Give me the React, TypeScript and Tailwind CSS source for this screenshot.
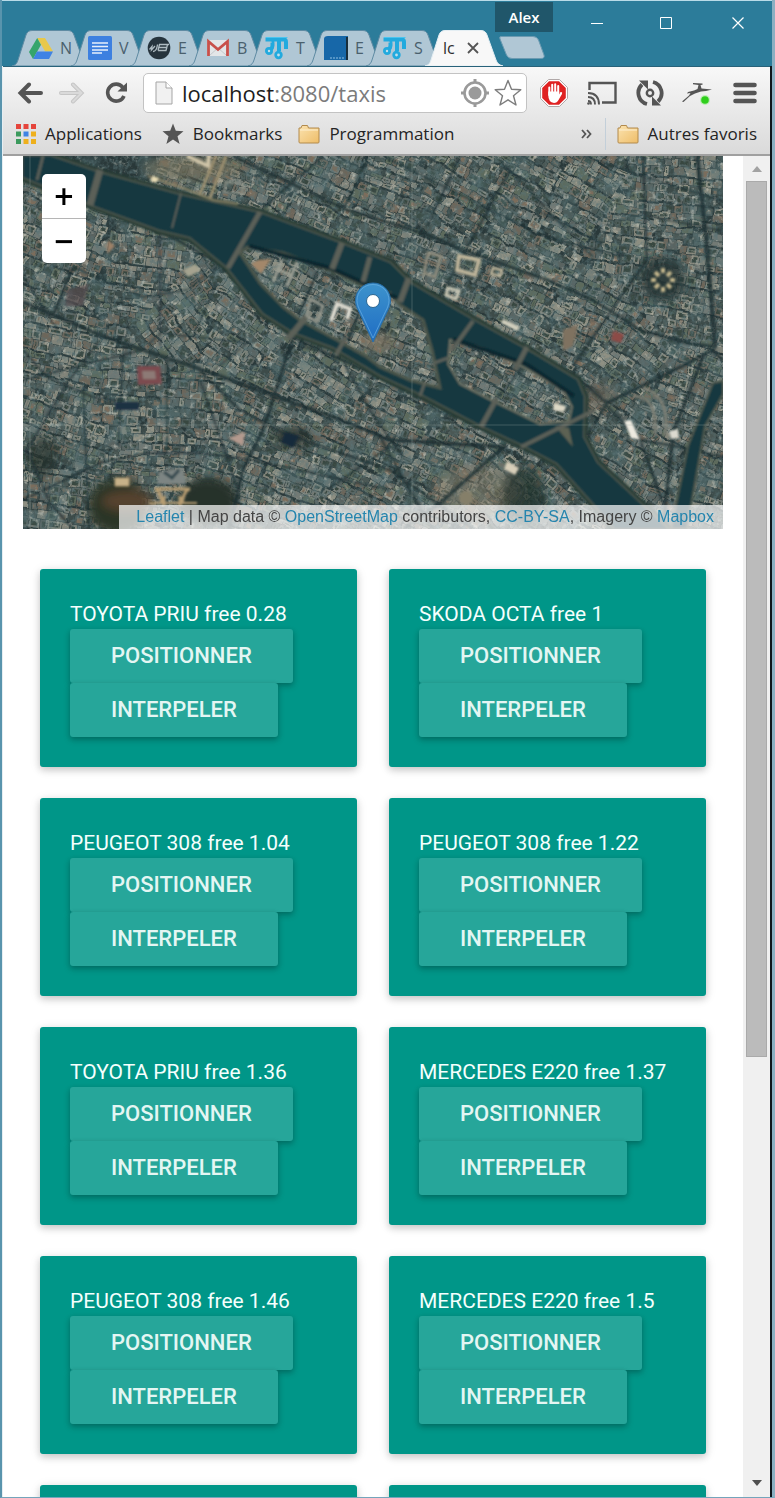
import React from "react";

/* ---------- satellite map drawing ---------- */

function makeRandom(seed: number) {
  let s = seed;
  return () => {
    s = (s * 1664525 + 1013904223) % 4294967296;
    return s / 4294967296;
  };
}

const DISTRICTS: [number, number, number][] = [
  [40, 110, 22], [110, 120, 8], [160, 160, 52], [210, 170, 35], [30, 190, 12],
  [100, 240, 4], [40, 270, 20], [170, 250, 5], [230, 240, 25], [300, 230, 30],
  [130, 280, 3], [200, 320, 20], [270, 320, 22], [340, 270, 24], [330, 340, 28],
  [420, 330, 24], [460, 350, 40], [20, 340, 8], [300, 20, 25], [360, 40, 20],
  [430, 40, 30], [500, 30, 28], [420, 110, 22], [490, 90, 26], [550, 50, 30],
  [600, 80, 8], [650, 50, 4], [650, 130, 10], [690, 90, 6], [560, 150, 25],
  [500, 150, 28], [610, 200, 35], [660, 230, 20], [630, 300, 30], [680, 320, 20],
  [260, 130, 28], [330, 160, 28], [390, 190, 25], [480, 230, 27], [230, 20, 20],
];

const SHADES = ["#737a74", "#5a6460", "#84857a", "#4b5955", "#6d665a", "#8f9083", "#3d4c4a", "#5d6a5c"];

function buildBlocks() {
  const random = makeRandom(75);
  const fills = SHADES.map(() => "");
  const courts: string[] = ["", ""];
  DISTRICTS.forEach(([cx, cy, angle], index) => {
    const a = (angle * Math.PI) / 180;
    const ux = Math.cos(a);
    const uy = Math.sin(a);
    let v = -95;
    let row = 0;
    while (v < 95) {
      const h = 5 + random() * 5;
      let u = -95 + random() * 5;
      while (u < 95) {
        const w = 4 + random() * 9;
        const x = cx + u * ux - v * uy;
        const y = cy + u * uy + v * ux;
        const inside = x > -12 && x < 712 && y > -12 && y < 385;
        if (inside) {
          let nearest = 0;
          let best = Infinity;
          DISTRICTS.forEach(([dx, dy], i) => {
            const d = (dx - x) ** 2 + (dy - y) ** 2;
            if (d < best) {
              best = d;
              nearest = i;
            }
          });
          if (nearest === index) {
            const quad = (inset: number) => {
              const pts = [
                [inset, inset], [w - 0.6 - inset, inset],
                [w - 0.6 - inset, h - 0.6 - inset], [inset, h - 0.6 - inset],
              ];
              return (
                "M" +
                pts.map(([p, q]) => `${(x + p * ux - q * uy).toFixed(1)} ${(y + p * uy + q * ux).toFixed(1)}`).join("L") +
                "Z"
              );
            };
            fills[Math.floor(random() * SHADES.length)] += quad(0);
            if (random() < 0.65) courts[random() < 0.8 ? 0 : 1] += quad(1.9);
          }
        }
        u += w;
      }
      row += 1;
      v += h + (row % 3 === 0 ? 1.6 : 0);
    }
  });
  return { fills, courts };
}

const BLOCKS = buildBlocks();

const SHORE =
  "M0 0L27 0L77 17L157 39L237 57L317 87L367 107L387 127L450 164L504 194L554 224L561 241L560 281L574 307L617 347L645 373L592 373L570 347L534 307L500 289L457 269L400 239L357 219L344 211L310 191L270 176L240 157L204 111L167 81L137 74L74 51L0 21Z";
const CITE =
  "M217 97L224 91L260 97L307 114L344 131L367 137L377 149L400 164L409 194L417 232L387 224L357 211L344 201L314 184L277 164L260 151L237 127Z";
const SAINT_LOUIS = "M427 184L457 191L500 211L540 234L549 251L546 265L517 268L470 245L437 228L425 208Z";
const BASIN = "M690 227L700 225L700 238L682 270L664 373L648 373L665 290Z";

const STREETS: [string, number][] = [
  ["M0 146L77 179L120 194L174 212L254 241L310 261L367 284L484 291", 4],
  ["M270 181L257 221L240 274L220 314L206 373", 3.5],
  ["M174 212L217 254L260 277L367 314L450 373", 2.5],
  ["M177 224L197 281L214 331", 2],
  ["M0 224L67 207L120 194", 2],
  ["M77 184L44 227L4 294L27 347L50 373", 2],
  ["M0 194L24 221L70 241L100 245", 2],
  ["M144 201L144 295", 1.5],
  ["M0 344L77 307L124 297L177 297L230 304L367 334", 2],
  ["M120 194L137 177L224 187", 1.5],
  ["M50 111L120 141L164 134L197 107", 1.5],
  ["M170 181L194 127", 1.5],
  ["M50 111L30 160", 2.5],
  ["M137 74L137 190", 1.2],
  ["M74 51L140 76L204 112", 3],
  ["M204 113L267 180L344 215L400 243L500 293", 2.5],
  ["M0 120L35 175", 1.5],
  ["M210 0L324 54L400 77L440 94L524 124L570 144L617 174L664 187L694 191", 3],
  ["M437 0L404 71", 2.5],
  ["M487 14L417 141", 2.5],
  ["M477 4L570 101", 1.8],
  ["M300 0L240 52", 2.2],
  ["M345 0L320 55", 1.8],
  ["M360 0L440 40L520 80L600 101", 1.8],
  ["M620 0L624 104L584 161L550 210", 2.2],
  ["M674 0L684 90L692 191", 4.5],
  ["M584 247L640 220L690 194L700 205", 3.5],
  ["M514 54L604 101", 1.5],
  ["M560 0L620 20L700 45", 1.8],
  ["M626 60L700 75", 1.8],
  ["M617 284L657 291L700 301", 2.5],
  ["M680 201L650 277L640 373", 3.5],
  ["M564 280L584 247L555 222", 2.5],
  ["M584 250L617 284L640 347", 2.5],
  ["M480 291L417 347L380 373", 3.5],
  ["M357 281L394 347L410 373", 2.5],
  ["M267 185L320 205L350 260L380 300", 1.8],
  ["M367 290L310 330", 1.8],
  ["M60 230L66 373", 1.6],
  ["M100 200L95 290", 1.6],
  ["M224 187L190 215", 1.6],
  ["M470 195L450 232", 1.6],
  ["M500 211L474 242", 1.6],
  ["M295 115L275 160", 2.5],
  ["M345 135L325 185", 2.5],
];

const BRIDGES: [string, number][] = [
  ["M20 0L14 24", 3], ["M77 14L67 49", 7], ["M158 37L149 72", 2], ["M237 56L205 112", 5],
  ["M319 87L309 113", 6], ["M347 101L340 126", 5], ["M386 122L377 146", 6],
  ["M450 165L429 194", 4], ["M504 191L492 214", 5], ["M425 202L411 207", 3],
  ["M474 242L458 271", 5], ["M498 291L572 254", 4], ["M323 181L313 199", 4],
  ["M284 160L265 183", 6], ["M402 226L397 240", 3],
];

function SatelliteMap() {
  return (
    <svg
      className="block h-full w-full"
      viewBox="0 0 700 373"
      preserveAspectRatio="xMidYMid slice"
      role="img"
      aria-label="Satellite view of central Paris"
    >
      <defs>
        <filter id="warp" x="0" y="0" width="100%" height="100%">
          <feTurbulence type="fractalNoise" baseFrequency="0.06" numOctaves="2" seed="4" result="n" />
          <feDisplacementMap in="SourceGraphic" in2="n" scale="6" xChannelSelector="R" yChannelSelector="G" />
          <feGaussianBlur stdDeviation="0.6" />
        </filter>
        <filter id="soft" x="-5%" y="-5%" width="110%" height="110%">
          <feGaussianBlur stdDeviation="0.8" />
        </filter>
        <filter id="haze" x="-50%" y="-50%" width="200%" height="200%">
          <feGaussianBlur stdDeviation="5" />
        </filter>
        <filter id="patches" x="0" y="0" width="100%" height="100%">
          <feTurbulence type="fractalNoise" baseFrequency="0.045" numOctaves="2" seed="12" />
          <feColorMatrix values="0 0 0 0 0.09  0 0 0 0 0.17  0 0 0 0 0.18  3.2 0 0 0 -1.5" />
        </filter>
        <filter id="grain" x="0" y="0" width="100%" height="100%">
          <feTurbulence type="fractalNoise" baseFrequency="0.22" numOctaves="3" seed="9" />
          <feColorMatrix values="0 0 0 0 0.1  0 0 0 0 0.17  0 0 0 0 0.18  2.6 0 0 0 -1.1" />
        </filter>
        <filter id="glints" x="0" y="0" width="100%" height="100%">
          <feTurbulence type="fractalNoise" baseFrequency="0.18" numOctaves="3" seed="31" />
          <feColorMatrix values="0 0 0 0 0.72  0 0 0 0 0.71  0 0 0 0 0.62  3.5 0 0 0 -2" />
        </filter>
      </defs>
      <rect width="700" height="373" fill="#2a393a" />
      <g filter="url(#warp)">
        {BLOCKS.fills.map((d, i) => (
          <path key={i} d={d} fill={SHADES[i]} />
        ))}
        <path d={BLOCKS.courts[0]} fill="#38463f" />
        <path d={BLOCKS.courts[1]} fill="#7b6d5c" />
      </g>
      <rect width="700" height="373" filter="url(#patches)" opacity="0.5" />
      <rect width="700" height="373" filter="url(#grain)" opacity="0.7" />
      <rect width="700" height="373" filter="url(#glints)" opacity="0.5" />

      {/* gardens and warm ground */}
      <g filter="url(#haze)">
        <ellipse cx="95" cy="350" rx="30" ry="28" fill="#2c3425" />
        <ellipse cx="185" cy="345" rx="30" ry="24" fill="#263329" />
        <ellipse cx="105" cy="345" rx="26" ry="10" fill="#57432f" />
        <ellipse cx="20" cy="300" rx="14" ry="20" fill="#223029" opacity="0.7" />
        <ellipse cx="455" cy="335" rx="45" ry="25" fill="#8a7e69" opacity="0.45" />
        <ellipse cx="500" cy="340" rx="22" ry="30" fill="#1d2d2b" opacity="0.7" />
        <ellipse cx="170" cy="12" rx="50" ry="12" fill="#7c735a" opacity="0.6" />
        <ellipse cx="640" cy="124" rx="22" ry="22" fill="#1f302f" opacity="0.8" />
        <ellipse cx="575" cy="240" rx="16" ry="12" fill="#6c6455" opacity="0.6" />
        <ellipse cx="355" cy="186" rx="18" ry="8" fill="#857762" opacity="0.7" />
        <ellipse cx="270" cy="282" rx="20" ry="10" fill="#243029" opacity="0.8" />
      </g>

      <g fill="none" stroke="#1d2f33" strokeLinejoin="round" filter="url(#soft)" opacity="0.8">
        {STREETS.map(([d, w]) => (
          <path key={d} d={d} strokeWidth={w} />
        ))}
      </g>

      {/* the river and its islands */}
      <g filter="url(#soft)">
        <path d={SHORE} fill="none" stroke="#253b35" strokeWidth="9" />
        <path d={SHORE} fill="none" stroke="#525b4f" strokeWidth="3" />
        <path d={SHORE + CITE + SAINT_LOUIS} fill="#123841" fillRule="evenodd" />
        <path d={CITE} fill="none" stroke="#4d574b" strokeWidth="3" />
        <path d={SAINT_LOUIS} fill="none" stroke="#6c7062" strokeWidth="2" />
        <path d="M226 90L307 112L374 142M430 183L503 208L551 240" fill="none" stroke="#0d272e" strokeWidth="4" />
        <path d={BASIN} fill="#123841" stroke="#4f594d" strokeWidth="2" />
        <path d="M532 270L550 291L546 272Z" fill="#5d6252" />
        {BRIDGES.map(([d, w]) => (
          <path key={d} d={d} stroke="#5c6059" strokeWidth={w} />
        ))}
      </g>

      {/* landmarks */}
      <g filter="url(#soft)">
        <g fill="none" stroke="#bdb49a" strokeWidth="4">
          <path d="M436 100L456 104L452 119L434 114Z" />
          <path d="M470 112L479 114L477 120L468 118Z" strokeWidth="2.5" />
          <path d="M425 132L436 135L433 143L423 139Z" stroke="#c9c7b5" strokeWidth="3" />
          <path d="M405 97L418 100L412 121L401 117Z" stroke="#8c8a7b" strokeWidth="3" />
          <path d="M308 165L314 148L327 153L324 163" stroke="#dedbd0" />
          <path d="M259 104L250 126M274 106L264 130M256 114L270 120" stroke="#9b9e93" strokeWidth="3" />
          <path d="M287 143L300 150L294 166L284 160Z" stroke="#8f9288" strokeWidth="3" />
          <path d="M164 0L185 10L186 -2" stroke="#cfc4a8" />
          <path d="M203 0L187 42M193 0L177 38" stroke="#9c8f70" strokeWidth="3" />
          <path d="M125 20L160 32L190 44L215 48" stroke="#8f8669" strokeWidth="2" />
          <path d="M203 26L220 28L219 38L201 36Z" stroke="#8c9288" strokeWidth="2" />
        </g>
        <path d="M235 104L248 103L238 118L228 108Z" fill="#a3876a" />
        <path d="M114 210L137 210L139 228L115 229Z" fill="#7b4c50" />
        <path d="M119 215L132 215L133 223L120 223Z" fill="#8d7a76" />
        <path d="M601 265L608 264L617 284L608 282Z" fill="#eeeae0" />
        <path d="M646 275L655 273L656 282L648 283Z" fill="#dcdad0" />
        <path d="M590 175L601 178L598 187L588 184Z" fill="#8c4b46" />
        <path d="M480 163L497 171L494 175L478 167Z" fill="#d2cfbd" />
        <path d="M531 247L543 250L541 256L530 254Z" fill="#ded9c6" />
        <path d="M484 305L496 312L492 319L481 313Z" fill="#d8cfb9" />
        <path d="M540 174L555 168L550 190L540 195Z" fill="#7f7260" />
        <circle cx="443" cy="342" r="7" fill="#857f69" />
        <path d="M205 282L222 276L220 290Z" fill="#b39a8e" />
        <path d="M160 114L172 108L178 114L165 121Z" fill="#a5a38f" />
        <path d="M44 134L66 128L60 150L42 150Z" fill="#55494b" opacity="0.7" />
        <path d="M85 84L92 90L84 98Z" fill="#9d8168" />
        <path d="M130 20L136 22L133 27L127 25Z" fill="#e8dcb4" />
        <path
          d="M640 112V117M640 131V136M628 124H633M647 124H652M632 116L636 120M644 128L648 132M648 116L644 120M636 128L632 132"
          stroke="#c4b68c"
          strokeWidth="4"
        />
        <path d="M610 240Q635 240 632 278M620 232Q648 240 642 280" fill="none" stroke="#7b7e73" strokeWidth="3" />
        <g stroke="#b79d72" strokeWidth="3" fill="none">
          <path d="M132 333Q137 334 139 347M167 333Q161 334 159 347M132 333H167M141 340V350M157 340V350" />
          <path d="M126 347H174" strokeWidth="2" />
          <path d="M92 322H106V330H92Z" fill="#c7b28a" strokeWidth="1" />
        </g>
        <path d="M136 316L160 312L163 328H134Z" fill="#7d8583" />
        <path d="M141 316L149 322L156 314" stroke="#33474d" strokeWidth="3" fill="none" />
        <path d="M92 246L116 246L116 254L92 254Z" fill="#1e3142" />
        <path d="M262 276L276 280L270 292L258 286Z" fill="#172a3b" />
      </g>

      {/* tile seams */}
      <path d="M7 0V373M389 0V373M0 269H700" stroke="#a8b3ad" strokeWidth="1" opacity="0.3" />
    </svg>
  );
}

function Marker() {
  return (
    <svg className="absolute left-1/2 top-[126px] h-[62px] w-[37px] -translate-x-1/2" viewBox="0 0 37 62" aria-hidden="true">
      <defs>
        <linearGradient id="pin" x1="0" y1="0" x2="0" y2="1">
          <stop offset="0" stopColor="#3d93cc" />
          <stop offset="1" stopColor="#1f6dc4" />
        </linearGradient>
      </defs>
      <path
        d="M18.500 1C8.500 1 1 8.800 1 18.500C1 22.500 2.500 26.500 4.500 30L18.500 60L32.500 30C34.500 26.500 36 22.500 36 18.500C36 8.800 28.500 1 18.500 1Z"
        fill="url(#pin)"
        stroke="#2a6fa8"
        strokeWidth="1"
      />
      <path
        d="M18.500 2.500C9.500 2.500 2.500 9.500 2.500 18.500C2.500 22 4 26 6 29.500L18.500 56L31 29.500C33 26 34.500 22 34.500 18.500C34.500 9.500 27.500 2.500 18.500 2.500Z"
        fill="none"
        stroke="#66ace0"
        strokeWidth="1"
        opacity="0.7"
      />
      <circle cx="18.500" cy="19" r="6.500" fill="#fff" stroke="#2d6690" />
    </svg>
  );
}

/* ---------- favicons ---------- */

function DriveIcon() {
  return (
    <svg viewBox="0 0 24 24" className="h-6 w-6">
      <path d="M8.200 2H16L24 15.500H16.200Z" fill="#e8c84b" />
      <path d="M8.200 2L0 16L4 23L12 8.800Z" fill="#35a56c" />
      <path d="M4 23L8 15.500H24L20 23Z" fill="#3f83e4" />
    </svg>
  );
}

function DocsIcon() {
  return (
    <svg viewBox="0 0 24 24" className="h-6 w-6">
      <rect width="24" height="24" rx="1.500" fill="#3d80e0" />
      <path d="M4 7H20M4 10.500H20M4 14H20M4 17H14" stroke="#e6effb" strokeWidth="1.500" />
    </svg>
  );
}

function DarkIcon() {
  return (
    <svg viewBox="0 0 24 24" className="h-6 w-6">
      <circle cx="12" cy="12" r="11.300" fill="#26343d" />
      <path
        d="M2.500 13.500L5 10.500L4.500 14L8 10M6 15.500C8.500 15.500 10 13 10.500 8.500M12 8.500H22M11.500 11.500H20.500M11 14.500H19.500M12.500 8.500L11 14.500M20.500 8.500L19 14.500"
        stroke="#aebbc1"
        strokeWidth="1.300"
        fill="none"
      />
    </svg>
  );
}

function GmailIcon() {
  return (
    <svg viewBox="0 0 24 24" className="h-6 w-6">
      <rect x="1" y="4" width="22" height="16" rx="1" fill="#e3e6e8" />
      <path d="M4 19L12 12L20 19" stroke="#c5c9cc" fill="none" />
      <path d="M2.500 20V5.500L12 13.500L21.500 5.500V20" fill="none" stroke="#c8504a" strokeWidth="2.800" />
    </svg>
  );
}

function MetroIcon() {
  return (
    <svg viewBox="0 0 24 24" className="h-6 w-6">
      <path
        d="M0.500 3.500H19Q21 3.500 21 6V13M6.500 5Q7.500 5 7.500 7.500V9.500Q7.500 12 5.500 13.500M14 5V15"
        fill="none"
        stroke="#22aade"
        strokeWidth="4"
      />
      <path d="M1 1.500H22.500" stroke="#4cc4ee" />
      <circle cx="4" cy="15" r="2.600" fill="#c2dfec" stroke="#22aade" strokeWidth="2.800" />
      <circle cx="13.500" cy="19" r="2.800" fill="#c2dfec" stroke="#22aade" strokeWidth="2.800" />
    </svg>
  );
}

function BookIcon() {
  return (
    <svg viewBox="0 0 24 24" className="h-6 w-6">
      <path d="M0 3Q0 0 4 0H24V24H0Z" fill="#1767a8" />
      <path d="M22 1H24V24H22Z" fill="#182e3c" />
      <path d="M6 22H20" stroke="#8fc0e2" strokeDasharray="2 1" />
    </svg>
  );
}

/* ---------- browser chrome ---------- */

type TabInfo = { label: string; icon: React.ReactNode };

const TABS: TabInfo[] = [
  { label: "N", icon: <DriveIcon /> },
  { label: "V", icon: <DocsIcon /> },
  { label: "E", icon: <DarkIcon /> },
  { label: "B", icon: <GmailIcon /> },
  { label: "T", icon: <MetroIcon /> },
  { label: "E", icon: <BookIcon /> },
  { label: "S", icon: <MetroIcon /> },
];

function TabShape({ active }: { active?: boolean }) {
  return (
    <svg className="absolute inset-0 h-full w-full" viewBox="0 0 78 36" preserveAspectRatio="none" aria-hidden="true">
      <path
        d="M0 36C4 35 5 33 6 30L14 5C15 2 17 0.500 20 0.500H56C59 0.500 61 2 62 5L71 30C72 33 74 35 78 36Z"
        fill={active ? "#f8f8f8" : "#b0c7d5"}
        stroke={active ? "#e4eef3" : "#5f8ba3"}
        strokeWidth="1"
      />
    </svg>
  );
}

function Tab({ label, icon }: TabInfo) {
  return (
    <a href="#tab" className="relative -mr-[19px] flex h-9 w-[78px] shrink-0 items-center pl-[17px]">
      <TabShape />
      <span className="relative">{icon}</span>
      <span className="relative ml-[7px] text-[16px] text-[#4a606d]">{label}</span>
    </a>
  );
}

function TitleBar() {
  return (
    <header className="relative h-[66px] shrink-0 border-t border-[#b9dbe8] bg-[#2c7c9a]">
      <nav className="flex pl-[10px] pt-[29px]" aria-label="Tabs">
        {TABS.map((tab, i) => (
          <Tab key={i} label={tab.label} icon={tab.icon} />
        ))}
        <div className="relative flex h-9 w-[78px] shrink-0 items-center pl-[18px] text-[16px] text-[#2d2d2d]">
          <TabShape active />
          <span className="relative">lc</span>
          <button type="button" aria-label="Close tab" className="relative ml-3">
            <svg viewBox="0 0 12 12" className="h-3 w-3">
              <path d="M1 1L11 11M11 1L1 11" stroke="#555" strokeWidth="1.800" />
            </svg>
          </button>
        </div>
        <button type="button" aria-label="New tab" className="-ml-1 mt-[6px] h-[23px] w-[46px]">
          <svg viewBox="0 0 46 23" className="h-full w-full">
            <path d="M2 0.500H34Q38 0.500 39.500 4L45 19Q46 22.500 42 22.500H13Q9 22.500 7.500 19L1 3Q0 0.500 2 0.500Z" fill="#b0c7d5" stroke="#6b9ab1" />
          </svg>
        </button>
      </nav>
      <div className="absolute right-0 top-0 flex items-start text-white">
        <button type="button" className="mt-px h-[30px] w-[58px] bg-[#20566a] text-[15px] font-semibold">
          Alex
        </button>
        <button type="button" aria-label="Minimize" className="flex h-11 w-[70px] items-center justify-center pl-[18px]">
          <svg viewBox="0 0 12 12" className="h-3 w-3"><path d="M0 6.500H12" stroke="#fff" /></svg>
        </button>
        <button type="button" aria-label="Maximize" className="flex h-11 w-[70px] items-center justify-center pl-4">
          <svg viewBox="0 0 12 12" className="h-3 w-3"><path d="M0.500 0.500H11.500V11.500H0.500Z" stroke="#fff" fill="none" /></svg>
        </button>
        <button type="button" aria-label="Close" className="flex h-11 w-[79px] items-center justify-center pl-[10px]">
          <svg viewBox="0 0 12 12" className="h-3 w-3"><path d="M0.500 0.500L11.500 11.500M11.500 0.500L0.500 11.500" stroke="#fff" strokeWidth="1.200" /></svg>
        </button>
      </div>
    </header>
  );
}

function AddressBar() {
  return (
    <div className="flex h-[46px] items-center pl-[14px] pr-[13px] pt-[6px]">
      <button type="button" aria-label="Back">
        <svg viewBox="0 0 26 22" className="h-[22px] w-[26px]">
          <path d="M24 11H4M12 2.500L3.500 11L12 19.500" fill="none" stroke="#555" strokeWidth="4" strokeLinecap="round" />
        </svg>
      </button>
      <button type="button" aria-label="Forward" className="ml-4">
        <svg viewBox="0 0 26 22" className="h-[22px] w-[26px]">
          <path d="M2 11H22M14 2.500L22.500 11L14 19.500" fill="none" stroke="#c6c6c6" strokeWidth="4" strokeLinecap="round" />
          <path d="M2 11H22M14 2.500L22.500 11L14 19.500" fill="none" stroke="#dadada" strokeWidth="2" strokeLinecap="round" />
        </svg>
      </button>
      <button type="button" aria-label="Reload" className="ml-5">
        <svg viewBox="0 0 22 22" className="h-[22px] w-[22px]">
          <path d="M17.800 5.300A8.500 8.500 0 1 0 19 14" fill="none" stroke="#555" strokeWidth="3.600" />
          <path d="M22 0.500V9.500H12.500Z" fill="#555" />
        </svg>
      </button>
      <div className="ml-4 flex h-10 min-w-0 flex-1 items-center rounded-[5px] border border-[#c3c3c3] bg-white pl-[11px] pr-1">
        <svg viewBox="0 0 18 24" className="h-6 w-[18px] shrink-0" aria-hidden="true">
          <path d="M1 1H11L17 7V23H1Z" fill="#f1f1f1" stroke="#a5a5a5" />
          <path d="M11 1V7H17" fill="#fff" stroke="#a5a5a5" />
        </svg>
        <a href="#taxis" className="ml-[9px] flex-1 whitespace-nowrap text-[22px] text-[#7b7b7b]">
          <span className="text-[#1d1d1d]">localhost</span>:8080/taxis
        </a>
        <button type="button" aria-label="Location">
          <svg viewBox="0 0 30 30" className="h-[30px] w-[30px]">
            <circle cx="15" cy="15" r="6.500" fill="#9a9a9a" />
            <circle cx="15" cy="15" r="10.500" fill="none" stroke="#9a9a9a" strokeWidth="2.600" />
            <path d="M15 1V5M15 25V29M1 15H5M25 15H29" stroke="#9a9a9a" strokeWidth="3" />
          </svg>
        </button>
        <button type="button" aria-label="Bookmark this page" className="ml-1">
          <svg viewBox="0 0 28 28" className="h-7 w-7">
            <path d="M14 1.500L17.500 10.300L26.800 10.800L19.500 16.800L22 26L14 20.800L6 26L8.500 16.800L1.200 10.800L10.500 10.300Z" fill="#fff" stroke="#7d7d7d" strokeWidth="1.400" strokeLinejoin="round" />
          </svg>
        </button>
      </div>
      <div className="ml-[13px] flex items-center">
        <button type="button" aria-label="AdBlock">
          <svg viewBox="0 0 28 28" className="h-7 w-7">
            <path d="M8.500 0.500H19.500L27.500 8.500V19.500L19.500 27.500H8.500L0.500 19.500V8.500Z" fill="#fff" stroke="#b0a8a8" />
            <path d="M9 2.200H19L25.800 9V19L19 25.800H9L2.200 19V9Z" fill="#df2222" />
            <path d="M9.300 16V8.500M12.200 13V5.800M15.200 13V5.200M18.200 14V7" stroke="#fff" strokeWidth="2" strokeLinecap="round" />
            <path d="M8.300 12.500H19.200V15.500L20.500 13Q22.800 12.500 22 15L18.500 21Q17 24 14 24Q8.300 23.500 8.300 16Z" fill="#fff" />
          </svg>
        </button>
        <button type="button" aria-label="Cast" className="ml-[19px]">
          <svg viewBox="0 0 30 24" className="h-6 w-[30px]">
            <path d="M2.500 9V2H28.500V21.500H15" fill="none" stroke="#555" strokeWidth="2.400" />
            <path d="M1 20Q4 20 4 23.500M1 16Q8 16 8 23.500M1 12Q12 12 12 23.500" fill="none" stroke="#555" strokeWidth="1.900" />
            <circle cx="1.500" cy="22.500" r="1.300" fill="#555" />
          </svg>
        </button>
        <button type="button" aria-label="Sync" className="ml-[19px]">
          <svg viewBox="0 0 28 28" className="h-7 w-7">
            <path d="M11 25A11.500 11.500 0 0 1 6 5.500M17 3A11.500 11.500 0 0 1 22 22.500" fill="none" stroke="#555" strokeWidth="3.800" />
            <path d="M3 1.500H12V10.500Z" fill="#555" />
            <path d="M25 26.500H16V17.500Z" fill="#555" />
            <circle cx="14" cy="14" r="3.200" fill="none" stroke="#555" strokeWidth="2.400" />
          </svg>
        </button>
        <button type="button" aria-label="Extension" className="ml-[18px]">
          <svg viewBox="0 0 30 24" className="h-6 w-[30px]">
            <path
              d="M0 20.500L7 14.500L8.500 12L5 12.500L6 11L12 9.500L15.500 8L16.500 4L11 3.200V2L20.500 2.500V3.700L18.500 4L19.500 7.500L30 8.500L24 10L19 10.500L13 12.500L8 15L1.500 21Z"
              fill="#555"
            />
            <circle cx="23" cy="19" r="5" fill="#a6ee9c" opacity="0.7" />
            <circle cx="23" cy="19" r="3.800" fill="#2fce1c" />
          </svg>
        </button>
        <button type="button" aria-label="Menu" className="ml-[21px]">
          <svg viewBox="0 0 24 22" className="h-[22px] w-6">
            <path d="M2.500 3H21.500M2.500 11H21.500M2.500 19H21.500" stroke="#555" strokeWidth="4.600" strokeLinecap="round" />
          </svg>
        </button>
      </div>
    </div>
  );
}

function FolderIcon() {
  return (
    <svg viewBox="0 0 22 20" className="h-5 w-[22px]" aria-hidden="true">
      <defs>
        <linearGradient id="folder" x1="0" y1="0" x2="1" y2="1">
          <stop offset="0" stopColor="#fbe3b0" />
          <stop offset="1" stopColor="#eebd68" />
        </linearGradient>
      </defs>
      <path d="M1 18V4H3L4 1.500H9.500L10.500 4H21V18Q21 19 20 19H2Q1 19 1 18Z" fill="url(#folder)" stroke="#b28a4d" />
      <path d="M2 6H20" stroke="#fdf0d2" />
    </svg>
  );
}

const APP_COLORS = ["#e5453c", "#e5453c", "#e5453c", "#3c9a5d", "#3f83e4", "#eeb01c", "#3c9a5d", "#eeb01c", "#eeb01c"];

function BookmarksBar() {
  const link = "flex items-center whitespace-nowrap";
  return (
    <nav aria-label="Bookmarks" className="flex h-[41px] items-center pl-[13px] pr-[13px] text-[17px] text-[#242424]">
      <a href="#apps" className={link}>
        <svg viewBox="0 0 20 20" className="mr-[9px] h-5 w-5" aria-hidden="true">
          {APP_COLORS.map((c, i) => (
            <rect key={i} x={(i % 3) * 7.500} y={Math.floor(i / 3) * 7.500} width="5" height="5" fill={c} />
          ))}
        </svg>
        Applications
      </a>
      <a href="#bookmarks" className={link + " ml-5"}>
        <svg viewBox="0 0 22 22" className="mr-[9px] h-[22px] w-[22px]" aria-hidden="true">
          <path d="M11 0.500L13.800 7.800L21.500 8.200L15.500 13.200L17.600 21L11 16.600L4.400 21L6.500 13.200L0.500 8.200L8.200 7.800Z" fill="#555" />
        </svg>
        Bookmarks
      </a>
      <a href="#programmation" className={link + " ml-4 gap-[9px]"}>
        <FolderIcon />
        Programmation
      </a>
      <div className="ml-auto flex items-center">
        <button type="button" aria-label="More bookmarks" className="mr-[13px]">
          <svg viewBox="0 0 11 10" className="h-[10px] w-[11px]">
            <path d="M1 1L4.500 5L1 9M6 1L9.500 5L6 9" fill="none" stroke="#555" strokeWidth="1.800" />
          </svg>
        </button>
        <span className="mr-[11px] h-8 w-px bg-[#c3cfd9]" />
        <a href="#autres" className={link + " gap-[9px]"}>
          <FolderIcon />
          Autres favoris
        </a>
      </div>
    </nav>
  );
}

/* ---------- page ---------- */

function MapPanel() {
  const link = "text-[#2585ae]";
  return (
    <section aria-label="Map" className="relative h-[373px] overflow-hidden">
      <SatelliteMap />
      <Marker />
      <div className="absolute left-[19px] top-[18px] flex w-11 flex-col overflow-hidden rounded-[5px] bg-white font-['DejaVu_Sans',sans-serif] text-[26px] font-semibold leading-none text-black">
        <button type="button" aria-label="Zoom in" className="h-[45px] border-b border-[#b5b5b5]">+</button>
        <button type="button" aria-label="Zoom out" className="h-11">−</button>
      </div>
      <p className="absolute bottom-0 right-0 whitespace-nowrap bg-white/70 pl-[17px] pr-[9px] font-['Liberation_Sans',Arial,sans-serif] text-[16px] leading-6 text-[#444]">
        <a href="#leaflet" className={link}>Leaflet</a> | Map data © <a href="#osm" className={link}>OpenStreetMap</a>{" "}
        contributors, <a href="#cc" className={link}>CC-BY-SA</a>, Imagery © <a href="#mapbox" className={link}>Mapbox</a>
      </p>
    </section>
  );
}

const TAXIS = [
  "TOYOTA PRIU free 0.28",
  "SKODA OCTA free 1",
  "PEUGEOT 308 free 1.04",
  "PEUGEOT 308 free 1.22",
  "TOYOTA PRIU free 1.36",
  "MERCEDES E220 free 1.37",
  "PEUGEOT 308 free 1.46",
  "MERCEDES E220 free 1.5",
  "",
  "",
];

function TaxiCard({ title }: { title: string }) {
  const button =
    "h-[54px] rounded-[3px] bg-[#26a69a] px-[41px] pb-[2px] text-[22px] font-medium text-[#e4f6f3] shadow-[0_3px_7px_rgba(0,0,0,0.18),0_2px_5px_rgba(0,0,0,0.14)]";
  return (
    <article className="flex min-h-[198px] flex-col items-start rounded-[3px] bg-[#009688] p-[30px] shadow-[0_3px_7px_rgba(0,0,0,0.16),0_2px_12px_rgba(0,0,0,0.10)]">
      {title && (
        <>
          <h2 className="text-[21px] leading-[30px] text-[#f4fffd]">{title}</h2>
          <button type="button" className={button}>POSITIONNER</button>
          <button type="button" className={button}>INTERPELER</button>
        </>
      )}
    </article>
  );
}

function Scrollbar() {
  return (
    <div aria-hidden="true" className="flex w-[27px] shrink-0 flex-col bg-[#f0f0f0]">
      <div className="flex h-[25px] shrink-0 items-center justify-center">
        <svg viewBox="0 0 10 6" className="h-[6px] w-[10px]"><path d="M0 6L5 0L10 6Z" fill="#a2a2a2" /></svg>
      </div>
      <div className="flex-1 px-[3px]">
        <div className="h-[68%] border border-[#aaa] bg-[#bbb]" />
      </div>
      <div className="flex h-7 shrink-0 items-center justify-center">
        <svg viewBox="0 0 10 6" className="h-[6px] w-[10px]"><path d="M0 0L5 6L10 0Z" fill="#4f4f4f" /></svg>
      </div>
    </div>
  );
}

export default function App() {
  return (
    <div className="flex h-screen flex-col overflow-hidden border-b border-l-2 border-r-[3px] border-b-[#74a5bb] border-l-[#5994ad] border-r-[#8bb0c2] bg-white font-['Open_Sans','Segoe_UI',sans-serif]">
      <TitleBar />
      <div className="flex min-h-0 flex-1 flex-col border-l border-r-2 border-l-[#e6eef2] border-r-[#10161b]">
        <div className="shrink-0 border-b-2 border-t border-b-[#a0a0a0] border-t-[#28627a] bg-linear-to-b from-[#f8f8f8] to-[#dadada]">
          <AddressBar />
          <BookmarksBar />
        </div>
        <div className="flex min-h-0 flex-1">
          <main className="min-w-0 flex-1 overflow-hidden px-5 font-['Roboto',sans-serif]">
            <MapPanel />
            <div className="grid grid-cols-2 gap-x-8 gap-y-[31px] px-[17px] pt-10">
              {TAXIS.map((title, i) => (
                <TaxiCard key={i} title={title} />
              ))}
            </div>
          </main>
          <Scrollbar />
        </div>
      </div>
    </div>
  );
}
